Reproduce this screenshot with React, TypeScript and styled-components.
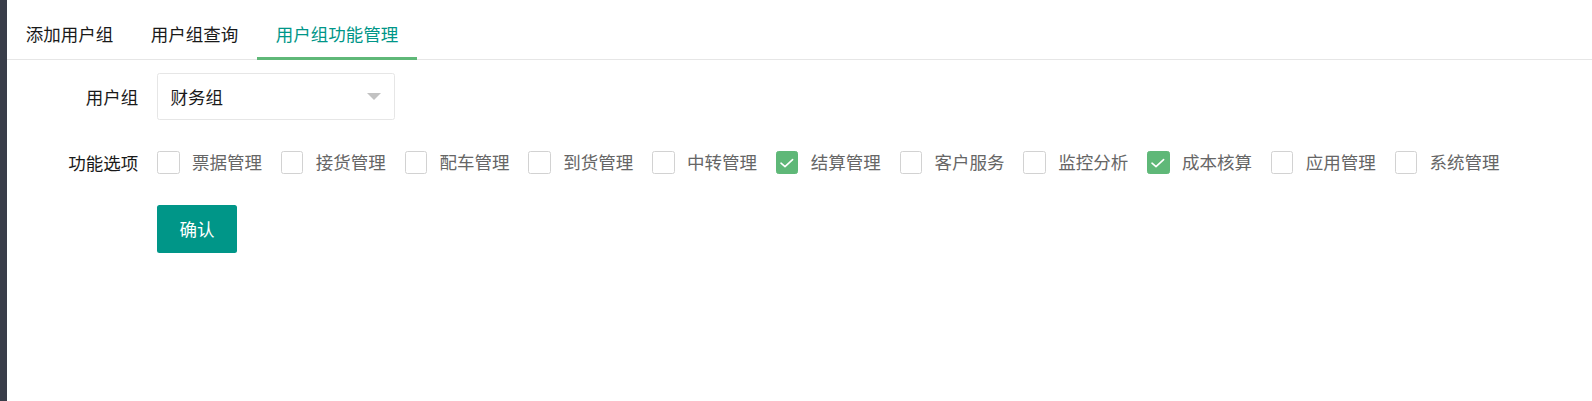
import React from "react";
import styled, { createGlobalStyle } from "styled-components";

const GlobalStyle = createGlobalStyle`
  html, body {
    margin: 0;
    padding: 0;
    background: #fff;
  }
  body {
    font-family: "Noto Sans CJK SC", "Noto Sans", sans-serif;
    color: #222;
  }
  * { box-sizing: border-box; }
`;

const Page = styled.div`
  display: flex;
  min-height: 401px;
`;

const SideBar = styled.div`
  width: 7px;
  flex: 0 0 7px;
  background: #393d49;
`;

const Main = styled.div`
  flex: 1;
  padding-top: 9px;
`;

const TabTitle = styled.ul`
  display: flex;
  margin: 0;
  padding: 0;
  list-style: none;
  height: 51px;
  border-bottom: 1px solid #e6e6e6;
`;

const TabItem = styled.li<{ $active?: boolean }>`
  position: relative;
  padding: 0 18.75px;
  height: 50px;
  line-height: 50px;
  font-size: 17.5px;
  color: ${(p) => (p.$active ? "#009688" : "#1a1a1a")};
  white-space: nowrap;
  cursor: pointer;
  &::after {
    content: "";
    display: ${(p) => (p.$active ? "block" : "none")};
    position: absolute;
    left: 0;
    right: 0;
    bottom: -1px;
    height: 3px;
    background: #5fb878;
  }
`;

const TabContent = styled.div`
  padding: 12.5px;
`;

const FormItem = styled.div`
  display: flex;
  align-items: center;
  margin-bottom: 18.75px;
`;

const Label = styled.label`
  width: 137.5px;
  flex: 0 0 137.5px;
  padding-right: 18.75px;
  text-align: right;
  font-size: 17.5px;
  line-height: 47.5px;
  color: #1a1a1a;
`;

const SelectBox = styled.div`
  position: relative;
  width: 237.5px;
  height: 47.5px;
  border: 1px solid #e6e6e6;
  border-radius: 2.5px;
  padding-left: 12.5px;
  font-size: 17.5px;
  line-height: 45.5px;
  color: #1a1a1a;
  background: #fff;
`;

const Arrow = styled.i`
  position: absolute;
  right: 12.5px;
  top: 50%;
  margin-top: -3.75px;
  width: 0;
  height: 0;
  border-left: 7.5px solid transparent;
  border-right: 7.5px solid transparent;
  border-top: 7.5px solid #c2c2c2;
`;

const CheckGroup = styled.div`
  display: flex;
  align-items: center;
  height: 47.5px;
`;

const CheckItem = styled.div`
  display: flex;
  align-items: center;
  margin-right: 18.75px;
  cursor: pointer;
`;

const Box = styled.span<{ $checked?: boolean }>`
  display: flex;
  align-items: center;
  justify-content: center;
  width: 22.5px;
  height: 22.5px;
  margin-right: 12.5px;
  border: 1px solid ${(p) => (p.$checked ? "#5fb878" : "#d2d2d2")};
  border-radius: 2.5px;
  background: ${(p) => (p.$checked ? "#5fb878" : "#fff")};
`;

const CheckText = styled.span`
  font-size: 17.5px;
  line-height: 22.5px;
  color: #666;
  white-space: nowrap;
`;

const Button = styled.button`
  margin-left: 137.5px;
  height: 47.5px;
  padding: 0 22.5px;
  border: none;
  border-radius: 2.5px;
  background: #009688;
  color: #fff;
  font-family: "Noto Sans CJK SC", "Noto Sans", sans-serif;
  font-size: 17.5px;
  line-height: 47.5px;
  cursor: pointer;
`;

const options: { name: string; checked: boolean }[] = [
  { name: "票据管理", checked: false },
  { name: "接货管理", checked: false },
  { name: "配车管理", checked: false },
  { name: "到货管理", checked: false },
  { name: "中转管理", checked: false },
  { name: "结算管理", checked: true },
  { name: "客户服务", checked: false },
  { name: "监控分析", checked: false },
  { name: "成本核算", checked: true },
  { name: "应用管理", checked: false },
  { name: "系统管理", checked: false },
];

const CheckIcon = () => (
  <svg width="16" height="16" viewBox="0 0 16 16" fill="none">
    <path d="M2 8.2 L6 11.6 L13.6 4.6" stroke="#fff" strokeWidth="1.6" strokeLinecap="round" strokeLinejoin="round" />
  </svg>
);

export default function App() {
  return (
    <>
      <GlobalStyle />
      <Page>
        <SideBar />
        <Main>
          <TabTitle>
            <TabItem>添加用户组</TabItem>
            <TabItem>用户组查询</TabItem>
            <TabItem $active>用户组功能管理</TabItem>
          </TabTitle>
          <TabContent>
            <FormItem>
              <Label>用户组</Label>
              <SelectBox>
                财务组
                <Arrow />
              </SelectBox>
            </FormItem>
            <FormItem>
              <Label>功能选项</Label>
              <CheckGroup>
                {options.map((o) => (
                  <CheckItem key={o.name}>
                    <Box $checked={o.checked}>{o.checked && <CheckIcon />}</Box>
                    <CheckText>{o.name}</CheckText>
                  </CheckItem>
                ))}
              </CheckGroup>
            </FormItem>
            <FormItem>
              <Button>确认</Button>
            </FormItem>
          </TabContent>
        </Main>
      </Page>
    </>
  );
}
